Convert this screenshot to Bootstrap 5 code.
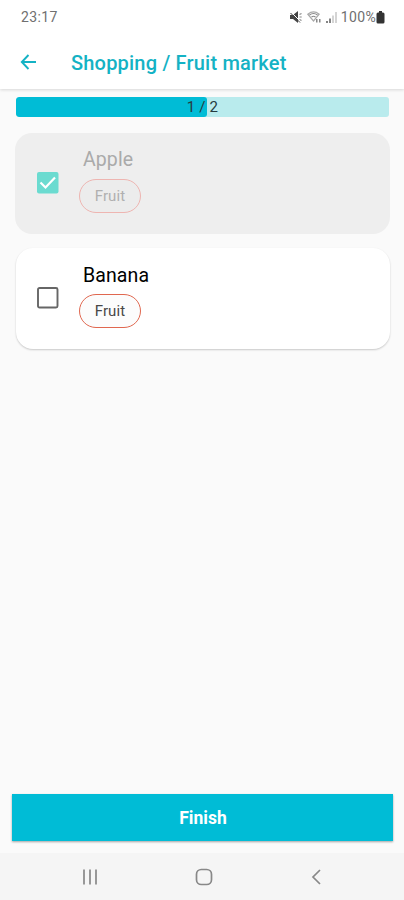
<!DOCTYPE html>
<html lang="en">
<head>
<meta charset="utf-8">
<meta name="viewport" content="width=device-width, initial-scale=1">
<title>Shopping / Fruit market</title>
<link href="https://cdn.jsdelivr.net/npm/bootstrap@5.3.0/dist/css/bootstrap.min.css" rel="stylesheet">
<style>
  body { font-family: Roboto, "Liberation Sans", sans-serif; background: #fafafa; color: #000; line-height: 1; }
  svg { display: block; flex: none; }
  .screen { height: 900px; width: 404px; overflow: hidden; }
  .app-top { height: 89px; box-shadow: 0 1px 3px rgba(0,0,0,.14); }
  .status { height: 34px; padding: 0 19px 0 21px; font-size: 14px; color: #707070; }
  .status-time { letter-spacing: .35px; }
  .battery-text { letter-spacing: .35px; margin-left: 3px; }
  .app-bar { height: 55px; padding: 3px 0 2px 20px; color: #14b2c4; }
  .app-title { font-size: 20px; font-weight: 500; letter-spacing: .2px; margin-left: 34px; padding-top: 1px; }
  .content { padding: 8px 14px 0 15px; }
  .count-bar { height: 20px; margin: 0 1px; border-radius: 3px; background: #b9ebed; }
  .count-bar .progress-bar { background: #00bcd6; border-radius: 3px; }
  .count-label { font-size: 15px; letter-spacing: .2px; color: #263b40; white-space: nowrap; }
  .item { height: 101px; border: 0; border-radius: 17px; padding: 0 0 0 22px; }
  .item > svg { margin-top: -2px; }
  .item-done { background: #eeeeee; margin-top: 16px; }
  .item-open { background: #fff; margin: 14px 0 0 1px; padding-left: 21px; box-shadow: 0 1px 2px rgba(0,0,0,.2); }
  .item-text { margin-left: 20px; padding-top: 16px; height: 101px; }
  .item-name { font-size: 19.5px; letter-spacing: .1px; line-height: 22px; margin-left: 4px; }
  .item-done .item-name { color: #aaa; }
  .item-open .item-name { padding-top: 1px; margin-bottom: -1px; }
  .tag { width: 62px; height: 34px; margin-top: 8px; border: 1.5px solid #e0674f; border-radius: 17px; font-size: 15px; letter-spacing: .1px; color: #484848; background: #fcfcfc; padding-top: 1px; }
  .item-done .tag { border: 1px solid #eeb5b1; color: #b0b0b0; background: #ececec; }
  .finish { height: 47px; margin: 0 11px 12px 12px; border-radius: 0; border: 0; padding: 2px 0 0 1px; background: #00bcd6; color: #fff; font-size: 17.5px; font-weight: 700; box-shadow: 0 1px 2px rgba(0,0,0,.35); }
  .finish:hover { background: #00a9c1; color: #fff; }
  .sys-nav { height: 47px; background: #f5f5f5; padding: 0 82px 0 82px; }
</style>
</head>
<body>
<div class="screen d-flex flex-column">
  <header class="app-top bg-white flex-shrink-0">
    <div class="status d-flex align-items-center">
      <span class="status-time me-auto">23:17</span>
      <svg width="14" height="14" viewBox="0 0 14 14"><path d="M1 5h3l5-4v12L4 9H1z" fill="#444"/><path d="M10.500 4.500l2-1M10.500 7h2.200M10.500 9.500l2 1" stroke="#888" stroke-width="1.200"/><path d="M2 2l10 10" stroke="#fff" stroke-width="1"/><path d="M1.500 3l9.500 9.500" stroke="#444" stroke-width="1"/></svg>
      <svg class="ms-1" width="15" height="14" viewBox="0 0 15 14"><path d="M.8 4.200Q6.500-.4 12.200 4.200L6.500 11z" fill="none" stroke="#aaa" stroke-width="1.200"/><path d="M2.500 5Q6.500 2 10.500 5M4.500 7Q6.500 5.500 8.500 7" fill="none" stroke="#888" stroke-width="1.200"/><path d="M9.800 9v3.500M12.800 9v3.500" stroke="#777" stroke-width="1.300"/></svg>
      <svg class="ms-1" width="12" height="13" viewBox="0 0 12 13"><path d="M1 10v2M4 7.500V12" stroke="#666" stroke-width="1.600"/><path d="M7 4.500V12M10 1v11" stroke="#d0d0d0" stroke-width="1.800"/></svg>
      <span class="battery-text">100%</span>
      <svg width="9" height="13" viewBox="0 0 9 13"><path d="M3 0h3v1.500h1q1.500 0 1.500 1.500v8q0 1.500-1.500 1.500H2Q.5 12.500.5 11V3Q.5 1.500 2 1.500h1z" fill="#333"/></svg>
    </div>
    <div class="app-bar d-flex align-items-center">
      <svg width="17" height="16" viewBox="0 0 17 16" fill="none" stroke="#14b2c4" stroke-width="1.900"><path d="M16 8H2.500M8.500 1L1.800 8l6.700 7"/></svg>
      <h1 class="app-title mb-0">Shopping / Fruit market</h1>
    </div>
  </header>

  <main class="content flex-grow-1">
    <div class="progress count-bar position-relative" role="progressbar" aria-valuenow="1" aria-valuemin="0" aria-valuemax="2">
      <div class="progress-bar" style="width: 51.3%"></div>
      <span class="count-label position-absolute top-50 start-50 translate-middle">1 / 2</span>
    </div>

    <div class="card item item-done flex-row align-items-center">
      <svg width="22" height="22" viewBox="0 0 22 22"><rect width="21.500" height="21.500" rx="2" fill="#6bdbd0"/><path d="M3.500 10.500l5 5L18 5.500" fill="none" stroke="#fff" stroke-width="2.200"/></svg>
      <div class="item-text">
        <div class="item-name">Apple</div>
        <div class="tag d-flex align-items-center justify-content-center">Fruit</div>
      </div>
    </div>

    <div class="card item item-open flex-row align-items-center">
      <svg width="22" height="22" viewBox="0 0 22 22"><rect x="1" y="1" width="19.500" height="19.500" rx="1.500" fill="none" stroke="#666" stroke-width="1.900"/></svg>
      <div class="item-text">
        <div class="item-name">Banana</div>
        <div class="tag d-flex align-items-center justify-content-center">Fruit</div>
      </div>
    </div>
  </main>

  <button class="btn finish flex-shrink-0" type="button">Finish</button>

  <nav class="sys-nav d-flex align-items-center justify-content-between flex-shrink-0">
    <svg width="16" height="16" viewBox="0 0 16 16"><path d="M2 .5v15M8 .5v15M14 .5v15" stroke="#888" stroke-width="1.700"/></svg>
    <svg width="18" height="18" viewBox="0 0 18 18"><rect x="1.500" y="1.500" width="15" height="15" rx="4.800" fill="none" stroke="#888" stroke-width="1.700"/></svg>
    <svg width="12" height="16" viewBox="0 0 12 16"><path d="M10 1L3 8l7 7" fill="none" stroke="#888" stroke-width="1.700"/></svg>
  </nav>
</div>
<script src="https://cdn.jsdelivr.net/npm/bootstrap@5.3.0/dist/js/bootstrap.bundle.min.js"></script>
</body>
</html>
